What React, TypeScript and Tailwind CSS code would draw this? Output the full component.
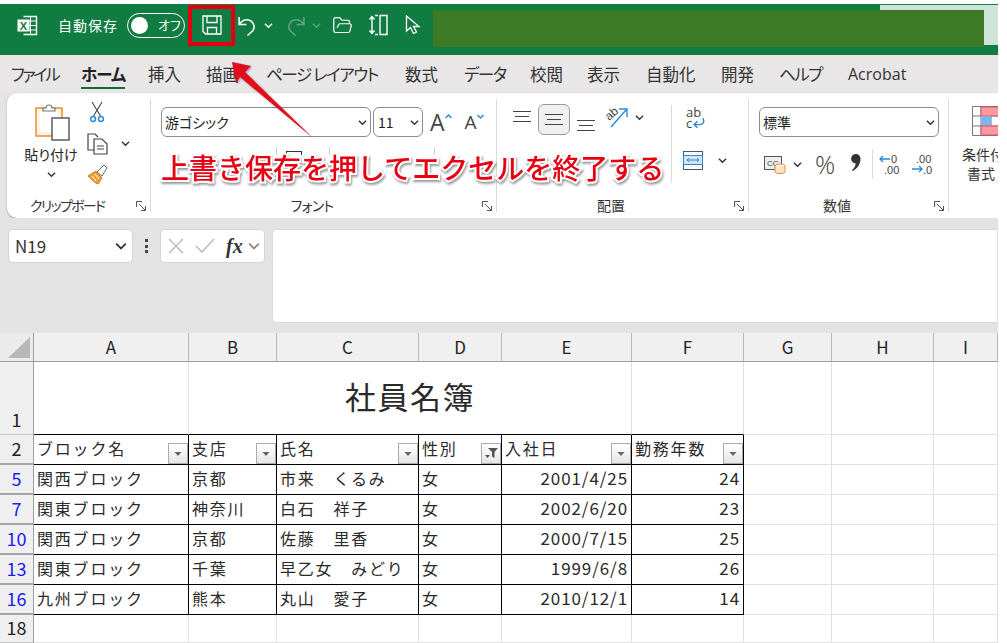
import type { ReactNode } from "react";
import { FolderOpen } from "lucide-react";

const tabs = [
  { t: "ファイル", c: "w-[70px] tracking-[-2.500px]" },
  { t: "ホーム", c: "w-[67px] tracking-[-1px] font-bold text-[#222]" },
  { t: "挿入", c: "w-[58px]" },
  { t: "描画", c: "w-[60px]" },
  { t: "ページ レイアウト", c: "w-[139px] tracking-[-1.400px]" },
  { t: "数式", c: "w-[59px]" },
  { t: "データ", c: "w-[66px] tracking-[-1.500px]" },
  { t: "校閲", c: "w-[57px]" },
  { t: "表示", c: "w-[59px]" },
  { t: "自動化", c: "w-[75px]" },
  { t: "開発", c: "w-[58px]" },
  { t: "ヘルプ", c: "w-[69px] tracking-[-1.500px]" },
];

const rows = [
  { no: "5", cells: ["関西ブロック", "京都", "市来　くるみ", "女", "2001/4/25", "24"] },
  { no: "7", cells: ["関東ブロック", "神奈川", "白石　祥子", "女", "2002/6/20", "23"] },
  { no: "10", cells: ["関西ブロック", "京都", "佐藤　里香", "女", "2000/7/15", "25"] },
  { no: "13", cells: ["関東ブロック", "千葉", "早乙女　みどり", "女", "1999/6/8", "26"] },
  { no: "16", cells: ["九州ブロック", "熊本", "丸山　愛子", "女", "2010/12/1", "14"] },
];

const headers = ["ブロック名", "支店", "氏名", "性別", "入社日", "勤務年数"];
const colNames = ["A", "B", "C", "D", "E", "F", "G", "H", "I"];

function Chevron({ className = "", size = 9 }: { className?: string; size?: number }) {
  return (
    <svg width={size} height={size} viewBox="0 0 10 10" fill="none" stroke="currentColor" strokeWidth="1.5" className={className}>
      <path d="M1 3l4 4 4-4" />
    </svg>
  );
}

function Launcher() {
  return (
    <svg width="11" height="11" viewBox="0 0 11 11" fill="none" stroke="#555" className="absolute right-[3px] bottom-[0px]">
      <path d="M.5 6V.5H6" />
      <path d="M3 3l6.5 6.5M5 9.5h4.5V5" />
    </svg>
  );
}

function Group({ label, width, labelClass = "", children }: { label: string; width: string; labelClass?: string; children: ReactNode }) {
  return (
    <div className={`relative flex flex-col h-[113px] shrink-0 border-r border-[#d9d9d9] ${width}`}>
      <div className="flex-1 min-h-0">{children}</div>
      <div className={`h-[16px] flex items-center justify-center pr-[23px] pt-[2px] text-[14px] text-[#333] leading-none ${labelClass}`}>{label}</div>
      <Launcher />
    </div>
  );
}

function Select({ text, className }: { text: string; className: string }) {
  return (
    <div className={`h-[30px] flex items-center justify-between pl-[3px] pr-[3px] bg-white border border-[#8c8c8c] rounded-[6px] text-[14px] text-[#222] ${className}`}>
      <span>{text}</span>
      <Chevron className="text-[#333]" />
    </div>
  );
}

function AlignLines({ top }: { top: string }) {
  return (
    <svg width="18" height="14" viewBox="0 0 18 14" stroke="#444" className={top}>
      <path d="M0 1.5h18M2 6.5h14M0 11.5h18" />
    </svg>
  );
}

function FilterButton({ filtered }: { filtered?: boolean }) {
  return (
    <div className="absolute right-[0px] bottom-[0px] w-[20px] h-[21px] flex items-center justify-center border border-[#ababab] bg-gradient-to-b from-white to-[#e6e6e6]">
      {filtered ? (
        <svg width="13" height="11" viewBox="0 0 13 11" fill="#555">
          <path d="M3 0h10L9.5 4v6L7 8.5V4zM0 7h5L2.5 10z" />
        </svg>
      ) : (
        <svg width="8" height="4" viewBox="0 0 9 5" fill="#666">
          <path d="M0 0h9L4.5 5z" />
        </svg>
      )}
    </div>
  );
}

function RowHead({ children, blue, thick }: { children?: ReactNode; blue?: boolean; thick?: boolean }) {
  return (
    <div
      className={`flex items-end justify-center bg-[#efefef] border-r border-[#9e9e9e] pb-[3px] text-[18px] leading-[24px] ${thick ? "border-b-2 border-b-[#a5a5a5]" : "border-b border-b-[#c6c6c6]"} ${blue ? "text-[#1c1cf0]" : "text-[#222]"}`}
    >
      {children}
    </div>
  );
}

function Blank() {
  return <div className="border-r border-b border-[#e1e1e1]" />;
}

export default function App() {
  return (
    <div className="relative w-[1007px] h-[643px] overflow-hidden bg-white pt-[4px] [font-family:'Noto_Sans_CJK_JP','Noto_Sans',sans-serif]">
      <div className="w-[998px] h-[639px] flex flex-col overflow-hidden">
        {/* title bar */}
        <div className="relative h-[51px] shrink-0 bg-[#107c41] flex items-center pl-[17px] pb-[9px] text-white [font-feature-settings:'palt']">
          <div className="absolute right-0 top-[1px] w-[118px] h-[40px] bg-[#d0e3d9]" />
          <svg width="21" height="21" viewBox="0 0 21 21" className="shrink-0">
            <path d="M6.5 1.5h13v18h-13" fill="none" stroke="#fff" strokeWidth="1.4" />
            <path d="M12 6h7M12 10.500h7M12 15h7M13.500 2v17" stroke="#fff" />
            <rect x="0.500" y="4.500" width="12" height="12" fill="#fff" />
            <text x="6.500" y="14.500" textAnchor="middle" fontSize="11" fontWeight="700" fill="#107c41" fontFamily="Liberation Sans">X</text>
          </svg>
          <span className="ml-[20px] text-[14px] tracking-[1px] whitespace-nowrap">自動保存</span>
          <div className="ml-[9px] w-[58px] h-[25px] rounded-full border border-white flex items-center pl-[3px]">
            <div className="w-[17px] h-[17px] rounded-full bg-white" />
            <span className="ml-[10px] text-[13px]">オフ</span>
          </div>
          <svg width="20" height="20" viewBox="0 0 20 20" fill="none" stroke="#fff" strokeWidth="1.300" className="ml-[17px] shrink-0">
            <path d="M1 1h18v18H3.500L1 16.500z" />
            <path d="M5 1v6.500h10V1M5.500 19v-6.500h9V19" />
          </svg>
          <svg width="21" height="21" viewBox="0 0 20 20" fill="none" stroke="#fff" strokeWidth="1.500" className="ml-[15px] shrink-0">
            <path d="M2 2v7h7" />
            <path d="M2 9c3-4 7-5.500 11-3.500 4 2.500 4 7 2 9.500l-5 4.500" />
          </svg>
          <Chevron className="ml-[6px] text-white" />
          <svg width="21" height="21" viewBox="0 0 20 20" fill="none" stroke="#5fa583" strokeWidth="1.500" className="ml-[12px] shrink-0">
            <path d="M18 2v7h-7" />
            <path d="M18 9c-3-4-7-5.500-11-3.500-4 2.500-4 7-2 9.500l5 4.500" />
          </svg>
          <Chevron className="ml-[6px] text-[#5fa583]" />
          <FolderOpen size={21} strokeWidth={1.4} className="ml-[11px] shrink-0" />
          <svg width="20" height="22" viewBox="0 0 20 22" fill="none" stroke="#fff" strokeWidth="1.400" className="ml-[15px] shrink-0">
            <path d="M4 3v16M1.500 5.500L4 2.500l2.500 3M1.500 16.500l2.500 3 2.500-3" />
            <path d="M7 1.500h3M7 20.500h3M12 1.500h7v19h-7z" />
          </svg>
          <svg width="16" height="20" viewBox="0 0 16 20" fill="none" stroke="#fff" strokeWidth="1.300" className="ml-[17px] shrink-0">
            <path d="M1.500 1v15l4-3.500 3 6 3-1.500-3-5.500h5.500z" />
          </svg>
          <div className="relative ml-[12px] mt-[7px] w-[551px] h-[37px] bg-[#3c7a25] shrink-0" />
        </div>

        {/* tabs */}
        <div className="h-[38px] shrink-0 bg-[#e8e6e6] flex items-center pl-[11px] text-[16.500px] text-[#333] [font-feature-settings:'palt']">
          {tabs.map(({ t, c }) => (
            <div key={t} className={`relative h-[38px] flex items-center shrink-0 whitespace-nowrap ${c}`}>
              {t}
              {t === "ホーム" && <div className="absolute left-0 w-[44px] bottom-[4px] h-[2px] bg-[#0f6b3a]" />}
            </div>
          ))}
          <div className="text-[16px] [font-family:'Open_Sans',sans-serif]">Acrobat</div>
        </div>

        {/* ribbon */}
        <div className="bg-[#e4e4e4] pl-[7px] h-[125px] shrink-0 [font-feature-settings:'palt']">
          <div className="w-[1000px] h-[125px] bg-white rounded-[10px] flex pt-[6px] shadow-[0_1px_2px_rgba(0,0,0,.3)]">
            <Group label="クリップボード" width="w-[144px]" labelClass="tracking-[-1.700px]">
              <div className="flex pl-[18px] pt-[4px]">
                <div className="w-[52px] flex flex-col items-center leading-none text-[#222]">
                  <svg width="36" height="38" viewBox="0 0 36 38" fill="none" className="ml-[3px]">
                    <rect x="1" y="5" width="26" height="28" fill="#fff4e3" stroke="#e88e2c" strokeWidth="1.500" />
                    <rect x="5" y="8" width="18" height="21" fill="#fff" />
                    <path d="M8 8V5h3c0-4 6-4 6 0h3v3z" fill="#fff" stroke="#777" strokeWidth="1.200" />
                    <rect x="17" y="15" width="17" height="22" fill="#fff" stroke="#666" strokeWidth="1.600" />
                  </svg>
                  <span className="mt-[6px] whitespace-nowrap text-[14px]">貼り付け</span>
                  <Chevron className="mt-[9px] text-[#333]" />
                </div>
                <div className="ml-[9px] w-[22px] flex flex-col items-center">
                  <svg width="14" height="22" viewBox="0 0 14 22" fill="none" className="-mt-[2px]">
                    <path d="M2 1l8.500 14M12 1L3.500 15" stroke="#444" strokeWidth="1.100" />
                    <circle cx="3" cy="18" r="2.500" stroke="#2b88d8" strokeWidth="1.500" />
                    <circle cx="11" cy="18" r="2.500" stroke="#2b88d8" strokeWidth="1.500" />
                  </svg>
                  <svg width="21" height="22" viewBox="0 0 21 22" fill="none" stroke="#444" strokeWidth="1.200" className="mt-[10px]">
                    <path d="M7 17H1V1h7l3 3" />
                    <path d="M7 6h8l5 5v10H7z" />
                    <path d="M10 13h7M10 16h7" />
                  </svg>
                  <svg width="21" height="21" viewBox="0 0 21 21" className="mt-[9px]">
                    <path d="M1 12l8-5 6 7-4 6c-2 0-7-5-10-8z" fill="#f0a030" stroke="#d9801a" />
                    <path d="M10 8l7-7 3 3-5 8z" fill="#fff" stroke="#666" />
                    <path d="M5 12l4 5M8 10l4 5" stroke="#fff" />
                  </svg>
                </div>
                <Chevron className="ml-[13px] mt-[36px] text-[#333]" />
              </div>
            </Group>

            <Group label="フォント" width="w-[346px]" labelClass="tracking-[-.7px]">
              <div className="flex items-center pl-[10px] pt-[8px]">
                <Select text="游ゴシック" className="w-[210px]" />
                <Select text="11" className="w-[50px] ml-[2px] !pl-[4px]" />
                <span className="ml-[7px] text-[23px] leading-none text-[#444] [font-family:'Open_Sans',sans-serif]">A</span>
                <svg width="7" height="5" viewBox="0 0 7 5" fill="none" stroke="#2b88d8" strokeWidth="1.400" className="-mt-[12px]">
                  <path d="M.5 4l3-3 3 3" />
                </svg>
                <span className="ml-[13px] text-[19px] leading-none text-[#444] [font-family:'Open_Sans',sans-serif]">A</span>
                <svg width="7" height="5" viewBox="0 0 7 5" fill="none" stroke="#2b88d8" strokeWidth="1.400" className="-mt-[12px]">
                  <path d="M.5 1l3 3 3-3" />
                </svg>
              </div>
              <div className="flex pl-[125px] pt-[10px]">
                <div className="w-[1px] h-[8px] bg-[#ccc]" />
                <div className="ml-[9px] mt-[4px] w-[16px] h-[4px] border-t border-x border-[#333]" />
                <div className="ml-[27px] w-[1px] h-[8px] bg-[#ccc]" />
                <div className="ml-[104px] w-[1px] h-[8px] bg-[#ccc]" />
              </div>
            </Group>

            <Group label="配置" width="w-[252px]">
              <div className="flex">
                <div className="w-[175px] border-r border-[#d9d9d9] h-[78px] mt-[6px] flex items-start pl-[16px]">
                  <AlignLines top="mt-[5px]" />
                  <div className="ml-[7px] -mt-[1px] w-[32px] h-[31px] flex items-center justify-center bg-[#f0f0f0] border border-[#9b9b9b] rounded-[6px]">
                    <AlignLines top="" />
                  </div>
                  <AlignLines top="ml-[7px] mt-[14px]" />
                  <svg width="25" height="25" viewBox="0 0 25 25" fill="none" className="ml-[10px] -mt-[1px] overflow-visible">
                    <text x="0" y="14" fontSize="12" fill="#444" transform="rotate(-40 6 10)" fontFamily="Liberation Sans">ab</text>
                    <path d="M6 23L21 6M14 5h8v8" stroke="#2b88d8" strokeWidth="1.400" />
                  </svg>
                  <Chevron className="ml-[5px] mt-[8px] text-[#333]" />
                </div>
                <div className="pl-[13px] pt-[8px]">
                  <div className="h-[10px] leading-[10px] text-[13px] text-[#444] [font-family:'Open_Sans',sans-serif] ml-[1px]">ab</div>
                  <div className="flex items-center h-[10px] mt-[1px] ml-[1px] leading-[10px] text-[13px] text-[#444] [font-family:'Open_Sans',sans-serif]">
                    c
                    <svg width="13" height="11" viewBox="0 0 12 10" fill="none" stroke="#2b88d8" strokeWidth="1.300">
                      <path d="M10 0c2 4 0 6-3 6H2M5 3L2 6l3 3" />
                    </svg>
                  </div>
                  <div className="flex items-center mt-[23px] -ml-[2px]">
                    <svg width="20" height="19" viewBox="0 0 20 19" fill="none">
                      <rect x=".5" y=".5" width="19" height="18" stroke="#555" />
                      <rect x=".5" y="4.500" width="19" height="9" fill="#cfe5f8" stroke="#2b88d8" />
                      <path d="M4 9h12M6 7L4 9l2 2M14 7l2 2-2 2" stroke="#2b88d8" />
                    </svg>
                    <Chevron className="ml-[15px] text-[#333]" />
                  </div>
                </div>
              </div>
            </Group>

            <Group label="数値" width="w-[200px]">
              <div className="pl-[10px] pt-[8px]">
                <Select text="標準" className="w-[180px]" />
                <div className="flex items-center mt-[12px] h-[30px]">
                  <svg width="22" height="19" viewBox="0 0 22 19" fill="none" className="ml-[5px]">
                    <rect x=".5" y="1.500" width="17" height="13" fill="#eee" stroke="#555" />
                    <text x="3" y="11" fontSize="8" fill="#444" fontFamily="Liberation Sans">CC</text>
                    <ellipse cx="16" cy="11" rx="5" ry="2" fill="#fff" stroke="#e88e2c" />
                    <path d="M11 11v6c0 2 10 2 10 0v-6" fill="#fbe3c5" stroke="#e88e2c" />
                  </svg>
                  <Chevron className="ml-[7px] text-[#333]" />
                  <span className="ml-[13px] text-[25px] font-light leading-none text-[#444] [font-family:'Open_Sans',sans-serif]">%</span>
                  <svg width="10" height="17" viewBox="0 0 10 17" fill="#333" className="ml-[16px] -mt-[3px] shrink-0">
                    <path d="M5 0a4.500 4.500 0 0 1 4.500 4.700C9.500 10 6 15 1.500 17L1 16c2-1.500 3.500-3.500 3.700-6.500A4.700 4.700 0 0 1 5 0z" />
                  </svg>
                  <div className="ml-[11px] w-[1px] h-[30px] bg-[#d9d9d9]" />
                  <svg width="22" height="22" viewBox="0 0 22 22" fill="none" className="ml-[6px]">
                    <path d="M1 6h10M4 3L1 6l3 3" stroke="#2b88d8" strokeWidth="1.300" />
                    <text x="12" y="10" fontSize="11" fill="#444" fontFamily="Liberation Sans">0</text>
                    <text x="5" y="21" fontSize="11" fill="#444" fontFamily="Liberation Sans">.00</text>
                  </svg>
                  <svg width="22" height="22" viewBox="0 0 22 22" fill="none" className="ml-[10px]">
                    <text x="5" y="10" fontSize="11" fill="#444" fontFamily="Liberation Sans">.00</text>
                    <path d="M1 16h10M8 13l3 3-3 3" stroke="#2b88d8" strokeWidth="1.300" />
                    <text x="12" y="21" fontSize="11" fill="#444" fontFamily="Liberation Sans">.0</text>
                  </svg>
                </div>
              </div>
            </Group>

            <div className="w-[60px] shrink-0 flex flex-col pl-[13px] pt-[7px] overflow-hidden">
              <svg width="30" height="30" viewBox="0 0 30 30" fill="none" className="ml-[10px] shrink-0">
                <path d="M.5.5h29v29H.5zM.5 10h29M.5 20h29M9 .5v29M19 .5v29" stroke="#777" />
                <rect x="9" y="1" width="20" height="9" fill="#f79aa2" stroke="#d95561" />
                <rect x="9" y="10" width="10" height="10" fill="#7fb8e6" />
                <rect x="9" y="20" width="20" height="9" fill="#f79aa2" stroke="#d95561" />
              </svg>
              <div className="mt-[9px] text-[14px] leading-[19px] text-[#333] whitespace-nowrap">条件付き</div>
              <div className="text-[14px] leading-[19px] text-[#333] pl-[5px]">書式</div>
            </div>
          </div>
        </div>

        {/* formula bar */}
        <div className="h-[115px] shrink-0 bg-[#e3e3e3] flex items-start pl-[8px] pt-[11px]">
          <div className="w-[125px] h-[34px] bg-white rounded-[5px] border border-[#d6d6d6] flex items-center justify-between pl-[6px] pr-[5px] text-[17px] text-[#333]">
            <span>N19</span>
            <Chevron size={12} className="text-[#333]" />
          </div>
          <div className="w-[27px] h-[34px] flex flex-col items-center justify-center gap-[2.500px]">
            <div className="w-[3px] h-[3px] bg-[#444]" />
            <div className="w-[3px] h-[3px] bg-[#444]" />
            <div className="w-[3px] h-[3px] bg-[#444]" />
          </div>
          <div className="w-[105px] h-[34px] bg-white rounded-[5px] border border-[#d6d6d6] flex items-center pl-[6px]">
            <svg width="18" height="18" viewBox="0 0 18 18" stroke="#b5b5b5" strokeWidth="1.300">
              <path d="M2 2l14 14M16 2L2 16" />
            </svg>
            <svg width="20" height="16" viewBox="0 0 20 16" fill="none" stroke="#b5b5b5" strokeWidth="1.300" className="ml-[10px]">
              <path d="M1 8l6 6L19 1" />
            </svg>
            <span className="ml-[11px] text-[20px] leading-none font-bold italic text-[#333] [font-family:'Liberation_Serif',serif]">fx</span>
            <Chevron size={12} className="ml-[5px] text-[#888]" />
          </div>
          <div className="ml-[7px] flex-1 h-[94px] bg-white rounded-l-[5px] border border-[#dcdcdc]" />
        </div>

        {/* sheet */}
        <div className="flex-1 min-h-0 grid grid-cols-[34px_155px_88px_142px_83px_130px_112px_88px_102px_64px] grid-rows-[29px_73px_30px_30px_30px_30px_30px_30px_28px] text-[16px] text-[#2a2a2a]">
          <div className="bg-[#ebebeb] border-r border-b border-[#9e9e9e] flex items-end justify-end pr-[3px] pb-[3px]">
            <div className="w-0 h-0 border-l-[22px] border-l-transparent border-b-[21px] border-b-[#b7b7b7]" />
          </div>
          {colNames.map((c) => (
            <div key={c} className="bg-[#f0f0f0] border-r border-b border-r-[#b5b5b5] border-b-[#9e9e9e] flex items-center justify-center text-[17px] text-[#222]">
              {c}
            </div>
          ))}

          <RowHead>1</RowHead>
          <div className="border-r border-[#e1e1e1] border-b border-b-black" />
          <div className="col-span-4 border-r border-[#e1e1e1] border-b border-b-black flex items-center justify-center pb-[4px] text-[31px] tracking-[1.500px]">社員名簿</div>
          <div className="border-r border-[#e1e1e1] border-b border-b-black" />
          <Blank />
          <Blank />
          <Blank />

          <RowHead thick>2</RowHead>
          {headers.map((h) => (
            <div key={h} className="relative border-r border-b border-black flex items-center pl-[3px] pb-[3px] tracking-[1.800px] whitespace-nowrap">
              {h}
              <FilterButton filtered={h === "性別"} />
            </div>
          ))}
          <Blank />
          <Blank />
          <Blank />

          {rows.map((r) => [
            <RowHead key={r.no} blue thick>
              {r.no}
            </RowHead>,
            ...r.cells.map((c, i) => (
              <div
                key={r.no + i}
                className={`border-r border-b border-black flex items-center pb-[3px] whitespace-nowrap ${i >= 4 ? "justify-end pr-[3px] text-[17px] tracking-[.9px]" : "pl-[3px] tracking-[1.800px]"}`}
              >
                {c}
              </div>
            )),
            <Blank key={r.no + "g"} />,
            <Blank key={r.no + "h"} />,
            <Blank key={r.no + "i"} />,
          ])}

          <RowHead>18</RowHead>
          <Blank />
          <Blank />
          <Blank />
          <Blank />
          <Blank />
          <Blank />
          <Blank />
          <Blank />
          <Blank />
        </div>
      </div>

      {/* annotation */}
      <div className="absolute left-[188px] top-[5px] w-[47px] h-[41px] border-[4px] border-[#e0000f]" />
      <svg width="110" height="90" viewBox="0 0 110 90" className="absolute left-[220px] top-[55px] drop-shadow-[1px_1px_1px_rgba(0,0,0,.35)]">
        <path d="M12 7l19 4-6 6 68 66-73-61-4 6z" fill="#e20d1c" />
      </svg>
      <div className="absolute left-[161px] top-[147px] text-[28px] font-medium leading-[40px] whitespace-nowrap text-[#e60012] [-webkit-text-stroke:4px_white] [paint-order:stroke_fill] drop-shadow-[1px_2px_1px_rgba(0,0,0,.4)]">
        上書き保存を押してエクセルを終了する
      </div>
    </div>
  );
}
